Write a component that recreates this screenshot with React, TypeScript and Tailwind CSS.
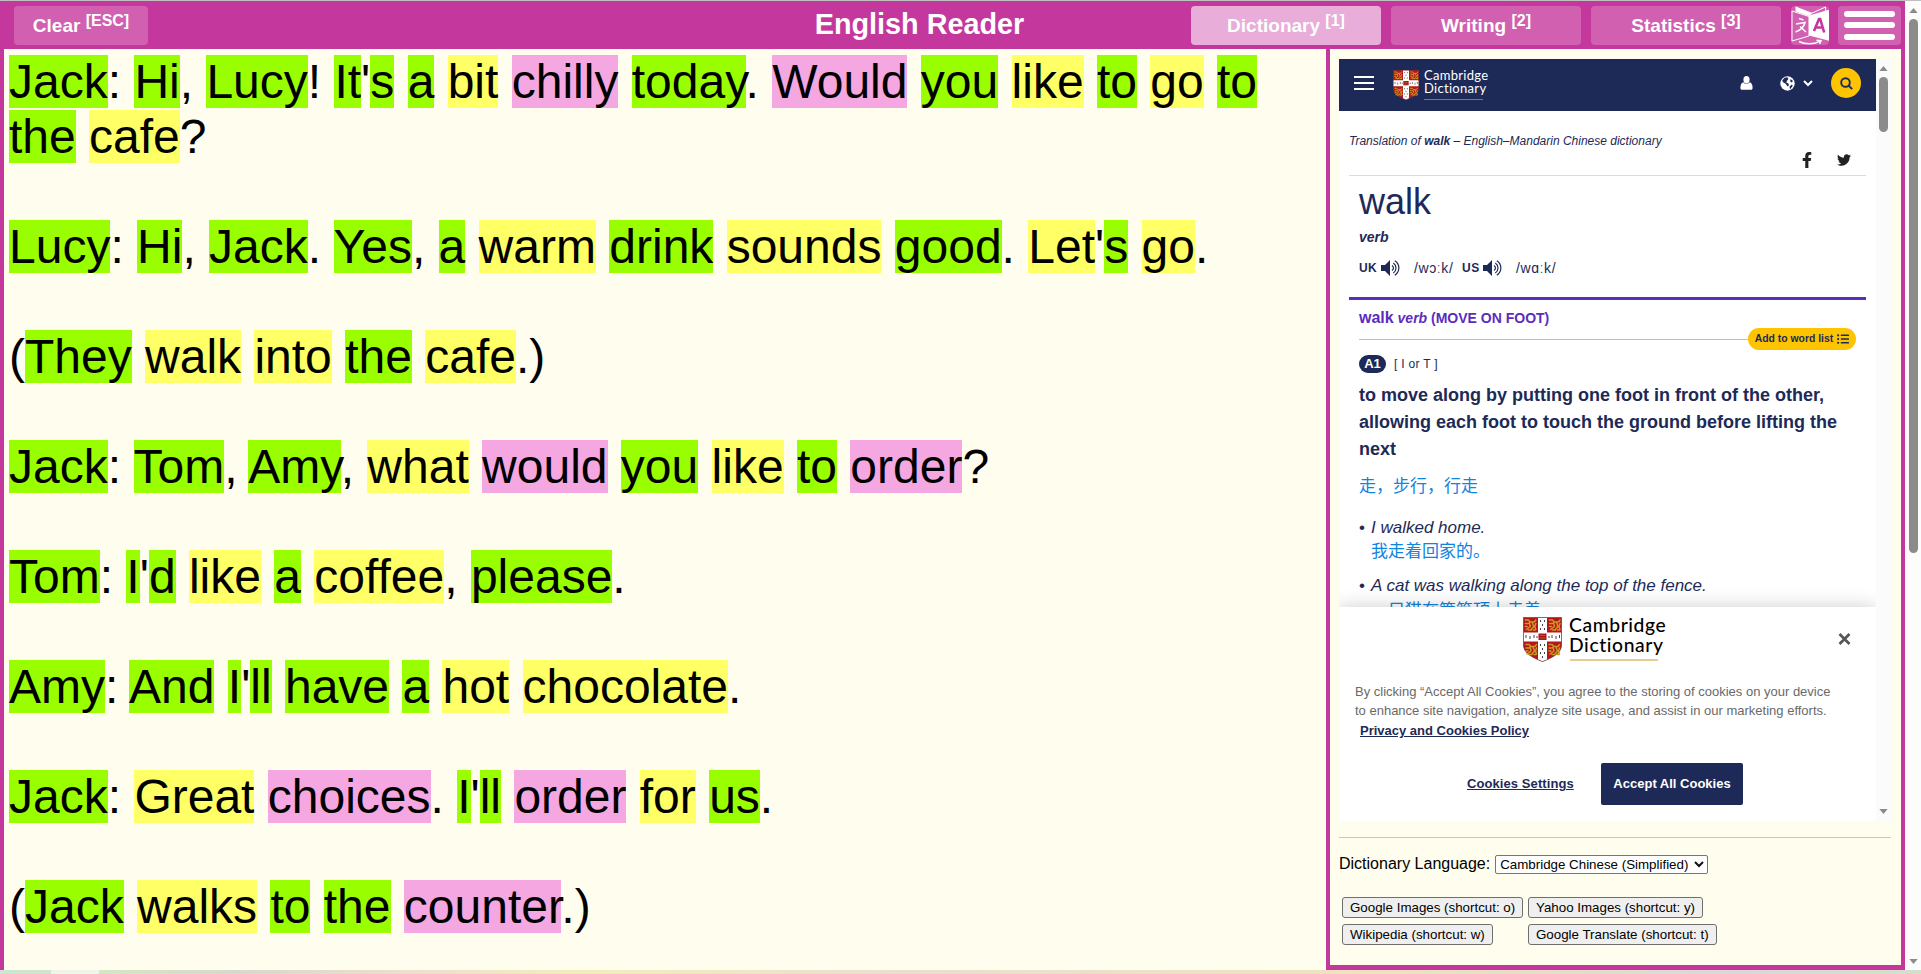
import React from "react";
import { FaFacebookF, FaListUl, FaTwitter } from "react-icons/fa";

const tone: Record<string, string> = {
  g: "bg-[#99ff00]",
  y: "bg-[#ffff66]",
  p: "bg-[#f4a7e0]",
};

const story: string[] = [
  "g:Jack|: |g:Hi|, |g:Lucy|! |g:It|'|g:s| |g:a| |y:bit| |p:chilly| |g:today|. |p:Would| |g:you| |y:like| |g:to| |y:go| |g:to| |g:the| |y:cafe|?",
  "g:Lucy|: |g:Hi|, |g:Jack|. |g:Yes|, |g:a| |y:warm| |g:drink| |y:sounds| |g:good|. |y:Let|'|g:s| |y:go|.",
  "(|g:They| |y:walk| |y:into| |g:the| |y:cafe|.)",
  "g:Jack|: |g:Tom|, |g:Amy|, |y:what| |p:would| |g:you| |y:like| |g:to| |p:order|?",
  "g:Tom|: |g:I|'|g:d| |y:like| |g:a| |y:coffee|, |g:please|.",
  "g:Amy|: |g:And| |g:I|'|g:ll| |g:have| |g:a| |y:hot| |y:chocolate|.",
  "g:Jack|: |y:Great| |p:choices|. |g:I|'|g:ll| |p:order| |y:for| |g:us|.",
  "(|g:Jack| |y:walks| |g:to| |g:the| |p:counter|.)",
];

function Line({ text }: { text: string }) {
  return (
    <p className="mb-[55px]">
      {text.split("|").map((part, i) =>
        /^[gyp]:/.test(part) ? (
          <span key={i} className={tone[part[0]]}>{part.slice(2)}</span>
        ) : (
          <React.Fragment key={i}>{part}</React.Fragment>
        ),
      )}
    </p>
  );
}

function Tab({ label, hint, className }: { label: string; hint: string; className: string }) {
  return (
    <button className={`h-[39px] rounded-[4px] text-[19px] leading-[39px] font-bold whitespace-nowrap ${className}`}>
      {label} <span className="relative -top-[6px] text-[16px]">{hint}</span>
    </button>
  );
}

function Lion({ x, y }: { x: number; y: number }) {
  return (
    <g transform={`translate(${x} ${y})`} fill="none" stroke="#c79a22" strokeWidth="1.500" strokeLinecap="round">
      <path d="M2 2.500h3l2 2h4l1.500-2M2 6h3M6 5l1 4l-4 3M9 5l1.500 4l-3 3.500M2 9h2M12.500 6l-1 3l1 3M5 12.500h3M10 12.500h2" />
    </g>
  );
}

function Shield({ className }: { className: string }) {
  return (
    <svg viewBox="0 0 39 45" className={className} preserveAspectRatio="none">
      <path d="M.4.4h38.200v27c0 9-9 13-19.100 17.200C9.400 40.400.4 36.400.4 27.400z" fill="#b8141c" />
      <path d="M15 .4h9v15h14.600v9H24v18.500l-4.500 1.700l-4.500-1.700V24.400H.4v-9H15z" fill="#fff" />
      <path d="M.4.4h38.200v27c0 9-9 13-19.100 17.200C9.400 40.400.4 36.400.4 27.400z" fill="none" stroke="#7d3a33" strokeWidth=".8" />
      <Lion x={0.3} y={0.5} />
      <Lion x={24.5} y={0.5} />
      <Lion x={1} y={25} />
      <Lion x={24} y={25} />
      <rect x="15.500" y="16.500" width="8" height="6.500" fill="#b5141c" />
      <path d="M17 18.500h5M17 21h5" stroke="#8a6a20" strokeWidth="1" />
      <path d="M17.500 3v2M21.500 3v2M19.500 7v2M17.500 11v2M21.500 11v2M17.500 27v2M21.500 27v2M19.500 31v2M17.500 35v2M21.500 35v2M19.500 39v2M3 18v3M7 19v3M11 18v3M14 19v2M26 19v2M29 18v3M33 19v3M36.500 18v3" stroke="#444" strokeWidth="1" />
    </svg>
  );
}

function TranslateIcon() {
  return (
    <svg viewBox="0 0 38 39" className="h-[39px] w-[38px]">
      <path d="M1 5L18 10.500V30L1 35z" fill="none" stroke="#fff" strokeWidth="1" />
      <path d="M18 8.500L34.500 1v4M5 1l3.500 2" fill="none" stroke="#fff" strokeWidth="1" />
      <path d="M4.500 .5V5.500L18 10L21.500 7z" fill="#fff" />
      <path d="M18 9.500L38 3.800v31L18 29.500z" fill="#fff" />
      <path d="M23 25L28 13h1.200l4 13.500M25 21.500h7" fill="none" stroke="#c4379c" strokeWidth="2.600" />
      <path d="M8 12.500l4.500 1.500M5 18l9-1.500c-1 4-4 7.500-9.500 9.500M9 20.500l6 5.500" fill="none" stroke="#fff" strokeWidth="1.500" />
      <path d="M8 35.500c6 3.200 15 3.200 21-.3M25.500 34.300l4.500 .3l-1.500 3.300" fill="none" stroke="#fff" strokeWidth="1.500" />
    </svg>
  );
}

function PersonIcon() {
  return (
    <svg viewBox="0 0 13 14" className="ml-[257px] h-[14px] w-[13px]" fill="#fff">
      <ellipse cx="6.500" cy="3.800" rx="3.100" ry="3.700" />
      <path d="M3.300 6.300C1 7 .4 9.500.4 12c0 1.200.7 1.800 1.700 1.800h8.800c1 0 1.700-.6 1.700-1.800c0-2.500-.6-5-2.900-5.700c-1.700 2-4.700 2-6.400 0z" />
    </svg>
  );
}

function GlobeIcon() {
  return (
    <svg viewBox="0 0 15 15" className="ml-[27px] size-[15px]">
      <circle cx="7.500" cy="7.500" r="7.200" fill="#fff" />
      <path d="M4.500 1.800l2.700-.6l1.300 1.500l-1.300 1.800l-1 2l2 .8l.8 2l-1.500 1.200l-1.800-2.800L3 6.200l-.8-1.700zM10.500 3l2.500 2l-1.300 1.500l-1.500-1zM9.500 10.500l2.500-2l.7 1.500l-2.700 3.200z" fill="#1d2a57" />
    </svg>
  );
}

function Speaker() {
  return (
    <svg viewBox="0 0 20 16" className="h-4 w-5" fill="none" stroke="#1d2a57" strokeWidth="1.200">
      <path d="M0 5h4l5-5v16l-5-5H0z" fill="#1d2a57" stroke="none" />
      <path d="M11 5.500c2 1.500 2 3.500 0 5M12.300 3c3.600 2.500 3.600 7.500 0 10M13.800.8c5.400 3.600 5.400 10.800 0 14.400" />
    </svg>
  );
}

function Up() {
  return <svg viewBox="0 0 10 6" className="h-[5px] w-[9px]"><path d="M5 0l5 6H0z" fill="#8b8b8b" /></svg>;
}
function Down() {
  return <svg viewBox="0 0 10 6" className="h-[5px] w-[9px]"><path d="M5 6l5-6H0z" fill="#8b8b8b" /></svg>;
}

function CookieNotice() {
  return (
    <div className="absolute inset-x-0 bottom-0 h-[214px] bg-white shadow-[0_0_18px_rgba(0,0,0,0.2)]">
      <div className="flex pt-[10px] pl-[184px]">
        <Shield className="h-[45px] w-[39px]" />
        <div className="ml-[8px] h-[44px] w-[88px] border-b-2 border-[#e6cb95] font-[Lato,sans-serif] text-[19.300px] leading-[20px] font-medium tracking-[0.6px] whitespace-nowrap text-black">
          <div className="-mt-[2px] -ml-px">Cambridge<br />Dictionary</div>
        </div>
        <svg viewBox="0 0 12 12" className="mt-[16px] ml-[180px] h-[12px] w-[13px]" stroke="#565656" strokeWidth="2.700">
          <path d="M1 1l10 10M11 1L1 11" />
        </svg>
      </div>
      <div className="mt-[20px] pl-4 text-[13px] leading-[19px] whitespace-nowrap text-[#696969]">
        By clicking “Accept All Cookies”, you agree to the storing of cookies on your device<br />
        to enhance site navigation, analyze site usage, and assist in our marketing efforts.
        <div className="mt-px ml-[5px] font-bold text-[#1d2a57] underline">Privacy and Cookies Policy</div>
      </div>
      <div className="mt-[23px] flex items-center pl-[128px] text-[13px] font-bold">
        <a className="w-[134px] tracking-[0.08px] text-[#1d2a57] underline">Cookies Settings</a>
        <button className="h-[42px] w-[142px] rounded-[2px] bg-[#1d2a57] text-white">Accept All Cookies</button>
      </div>
    </div>
  );
}

function DictionaryFrame() {
  return (
    <div className="flex h-[762px] w-[552px] bg-white text-[#1d2a57]">
      <div className="relative h-full w-[537px] overflow-hidden">
        <div className="flex h-[52px] items-center bg-[#1d2a57] pb-[4px] pl-[15px] text-white">
          <div className="flex w-5 flex-col gap-[4px]">
            <i className="h-[2px] bg-white" /><i className="h-[2px] bg-white" /><i className="h-[2px] bg-white" />
          </div>
          <Shield className="mt-[3px] ml-[19px] h-[30px] w-[26px]" />
          <div className="mt-[3px] ml-[5px] h-[30px] w-[59px] border-b border-[#8e794f] font-[Lato,sans-serif] text-[13px] leading-[13.500px] tracking-[0.3px] whitespace-nowrap">
            <div className="-mt-px">Cambridge<br />Dictionary</div>
          </div>
          <PersonIcon />
          <GlobeIcon />
          <svg viewBox="0 0 10 7" className="ml-[8px] h-[7px] w-[10px]" fill="none" stroke="#fff" strokeWidth="2"><path d="M1 1l4 4l4-4" /></svg>
          <div className="ml-[18px] flex size-[30px] shrink-0 items-center justify-center rounded-full bg-[#fec400]">
            <svg viewBox="0 0 13 13" className="size-[13px]" fill="none" stroke="#1d2a57" strokeWidth="1.900"><circle cx="5.500" cy="5.500" r="4.300" /><path d="M8.500 8.500l3.700 3.700" /></svg>
          </div>
        </div>
        <div className="mx-[10px] h-[65px] border-b border-[#dcdcdc] pt-[21px] text-[12px] leading-[18px] italic">
          Translation of <b>walk</b> – English–Mandarin Chinese dictionary
          <div className="mt-[2px] flex justify-end gap-[25px] pr-[15px] text-[#222]">
            <FaFacebookF className="h-[16px] w-[10px]" /><FaTwitter className="mt-px size-[14px]" />
          </div>
        </div>
        <div className="mx-[10px] h-[124px] border-b-[3px] border-[#5b2dbe] pl-[10px]">
          <div className="pt-[5px] text-[36px] leading-[42px]">walk</div>
          <div className="mt-[5px] text-[14px] leading-[18px] font-bold italic">verb</div>
          <div className="mt-[13px] flex h-[18px] items-center text-[14px] whitespace-nowrap">
            <b className="mr-[4px] w-[18px] text-[12px] tracking-[0.3px]">UK</b><Speaker />
            <span className="ml-[13px] w-[48px] tracking-[0.6px]">/wɔːk/</span>
            <b className="mr-[4px] w-[17px] text-[12px] tracking-[0.5px]">US</b><Speaker />
            <span className="ml-[13px] tracking-[0.6px]">/wɑːk/</span>
          </div>
        </div>
        <div className="px-5">
          <div className="pt-[8px] text-[14px] leading-[20px] font-bold text-[#5b2dbe]">
            <span className="text-[16px]">walk</span> <i>verb</i> (MOVE ON FOOT)
          </div>
          <div className="flex h-[22px] items-center">
            <div className="h-px flex-1 bg-[#fec400]" />
            <div className="flex h-[22px] w-[108px] items-center justify-center gap-[4px] rounded-full bg-[#fec400] text-[10.400px] font-bold whitespace-nowrap text-[#1d2a57]">
              Add to word list <FaListUl className="size-[12px]" />
            </div>
          </div>
          <div className="mt-[5px] flex h-[18px] items-center gap-2 text-[12px]">
            <b className="flex h-[18px] w-[27px] items-center justify-center rounded-full bg-[#1d2a57] text-[13px] text-white">A1</b>
            <span className="tracking-[0.3px]">[ I or T ]</span>
          </div>
          <div className="mt-[9px] text-[18px] leading-[27px] font-bold whitespace-nowrap">
            to move along by putting one foot in front of the other,<br />
            allowing each foot to touch the ground before lifting the<br />next
          </div>
          <div className="mt-[9px] font-['Noto_Sans_CJK_SC',sans-serif] text-[17px] leading-[26px] text-[#0f84e0]">走，步行，行走</div>
          <div className="mt-[18px] flex text-[17px] leading-[24px]">
            <span className="w-[12px] shrink-0">•</span>
            <div><i>I walked home.</i><div className="-mt-[2px] mb-[2px] font-['Noto_Sans_CJK_SC',sans-serif] text-[#0f84e0]">我走着回家的。</div></div>
          </div>
          <div className="mt-[10px] flex text-[17px] leading-[24px]">
            <span className="w-[12px] shrink-0">•</span>
            <div><i>A cat was walking along the top of the fence.</i><div className="-mt-[1px] font-['Noto_Sans_CJK_SC',sans-serif] text-[#0f84e0]">一只猫在篱笆顶上走着。</div></div>
          </div>
        </div>
        <CookieNotice />
      </div>
      <div className="flex w-[15px] flex-col items-center bg-[#fbfbfb] pt-[7px] pb-[7px]">
        <Up />
        <div className="mt-[6px] h-[55px] w-[9px] rounded-full bg-[#8b8b8b]" />
        <div className="flex-1" />
        <Down />
      </div>
    </div>
  );
}

const sys = "h-[21px] justify-self-start rounded-[3px] border border-[#6f6f6f] bg-[#efefef] px-[7px] text-[13.333px] leading-[19px] whitespace-nowrap";

export default function App() {
  return (
    <div className="flex h-[974px] w-[1921px] flex-col overflow-hidden border-t border-[#c0c0c0] bg-[#fffded] font-['Liberation_Sans',Arial,sans-serif] text-black">
      <div className="flex h-[969px]">
        <div className="flex w-[1905px] flex-col bg-[#c4379c]">
          <header className="flex h-[48px] items-start pt-[5px] pl-[14px] text-white">
            <Tab label="Clear" hint="[ESC]" className="w-[134px] bg-[#d160b1]" />
            <h1 className="w-[1043px] pl-[500px] text-center text-[28.800px] leading-[37px] font-bold">English Reader</h1>
            <Tab label="Dictionary" hint="[1]" className="w-[190px] bg-[#e8add9]" />
            <Tab label="Writing" hint="[2]" className="ml-[10px] w-[190px] bg-[#d160b1]" />
            <Tab label="Statistics" hint="[3]" className="ml-[10px] w-[190px] bg-[#d160b1]" />
            <button className="ml-[10px] h-[39px] w-[38px] rounded-[4px] bg-[#d160b1]"><TranslateIcon /></button>
            <button className="ml-[9px] flex h-[39px] w-[63px] flex-col items-center rounded-[4px] bg-[#d160b1] pt-[5px]">
              <i className="h-[6px] w-[51px] rounded-full bg-white" />
              <i className="mt-[5px] h-[6px] w-[51px] rounded-full bg-white" />
              <i className="mt-[6px] h-[6px] w-[51px] rounded-full bg-white" />
            </button>
          </header>
          <div className="flex h-[921px] gap-1 pr-1 pl-1">
            <main className="w-[1322px] overflow-hidden bg-[#fffded] pt-[5px] pl-[5px] text-[48px] leading-[55px]">
              {story.map((t, i) => <Line key={i} text={t} />)}
            </main>
            <aside className="h-[916px] w-[571px] bg-[#fffded] pt-[10px] pl-[9px]">
              <DictionaryFrame />
              <div className="mt-4 h-px w-[552px] bg-[#c8c8c8]" />
              <div className="mt-[15px] flex h-[21px] items-center text-[16px]">
                Dictionary Language:
                <div className="mt-[2px] ml-[5px] flex h-[19px] w-[213px] items-center justify-between rounded-[2px] border border-[#767676] bg-white pr-[3px] pl-1 text-[13.333px] whitespace-nowrap">
                  Cambridge Chinese (Simplified)
                  <svg viewBox="0 0 10 7" className="h-[7px] w-[10px]" fill="none" stroke="#111" strokeWidth="2"><path d="M1 1l4 4l4-4" /></svg>
                </div>
              </div>
              <div className="mt-[23px] ml-[3px] grid grid-cols-[186px_auto] gap-y-[6px]">
                <button className={sys}>Google Images (shortcut: o)</button>
                <button className={sys}>Yahoo Images (shortcut: y)</button>
                <button className={sys}>Wikipedia (shortcut: w)</button>
                <button className={sys}>Google Translate (shortcut: t)</button>
              </div>
            </aside>
          </div>
        </div>
        <div className="flex w-4 flex-col items-center bg-[#fcfcfc] pt-[7px] pb-[6px]">
          <Up />
          <div className="mt-[6px] h-[534px] w-[9px] rounded-full bg-[#8b8b8b]" />
          <div className="flex-1" />
          <Down />
        </div>
      </div>
      <div className="h-1 bg-[linear-gradient(90deg,#cfe5cf_0,#cfe5cf_51px,#eef6ea_51px,#eef6ea_99px,#d2e8c4_99px,#d8d8cc_240px,#f0e0cc_430px,#f2eeb8_580px,#eadfcf_900px,#eee3bd_1350px,#ded6d6_1740px,#d4e0c8_1921px)]" />
    </div>
  );
}
